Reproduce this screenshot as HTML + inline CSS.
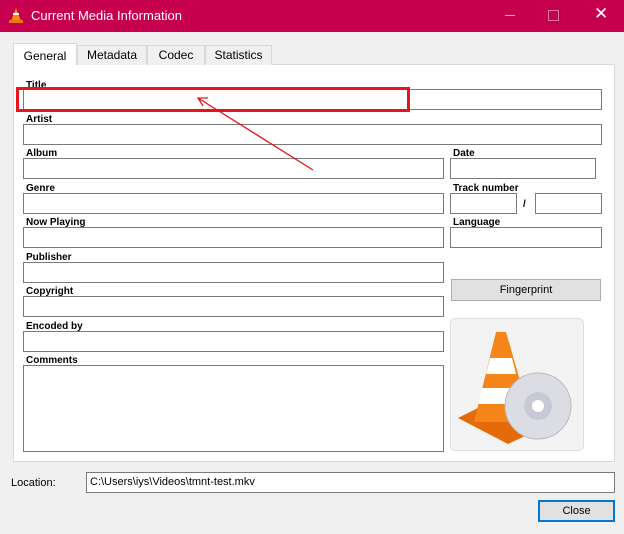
<!DOCTYPE html>
<html><head><style>
body{margin:0;width:624px;height:534px;background:#f0f0f0;font-family:"Liberation Sans",sans-serif;position:relative;overflow:hidden}
.a{position:absolute}
.in{position:absolute;background:#fff;border:1px solid #7a7a7a;box-sizing:border-box}
.lb{position:absolute;font-size:10px;font-weight:bold;color:#000}
.tab{position:absolute;top:45px;height:20px;font-size:12px;background:#f0f0f0;border:1px solid #d9d9d9;border-bottom:none;box-sizing:border-box;text-align:center;line-height:19px}
</style></head><body>
<div class="a" style="left:0;top:0;width:624px;height:32px;background:#c6004e"></div>
<svg class="a" style="left:8px;top:7px" width="16" height="17"><polygon points="8,1 3,14 13,14" fill="#f38a12"/><rect x="1" y="13" width="14" height="3" fill="#e67a0c"/><rect x="5" y="6" width="6" height="2" fill="#fff"/></svg>
<div class="a" style="left:31px;top:8px;color:#fff;font-size:13px">Current Media Information</div>
<div class="a" style="left:505px;top:15px;width:10px;height:1px;background:#f2a5c2"></div>
<div class="a" style="left:548px;top:10px;width:9px;height:9px;border:1px solid #e07aa0"></div>
<div class="a" style="left:594px;top:4px;color:#fff;font-size:17px">✕</div>
<div class="a" style="left:13px;top:64px;width:602px;height:398px;background:#fff;border:1px solid #d9d9d9;box-sizing:border-box"></div>
<div class="tab" style="left:13px;top:43px;width:64px;height:22px;background:#fff;border-color:#d9d9d9;line-height:24px">General</div>
<div class="tab" style="left:77px;width:70px">Metadata</div>
<div class="tab" style="left:147px;width:58px">Codec</div>
<div class="tab" style="left:205px;width:67px">Statistics</div>
<div class="lb" style="left:26px;top:80px">Title</div>
<div class="in" style="left:23px;top:89px;width:579px;height:21px"></div>
<div class="lb" style="left:26px;top:114px">Artist</div>
<div class="in" style="left:23px;top:124px;width:579px;height:21px"></div>
<div class="lb" style="left:26px;top:148px">Album</div>
<div class="in" style="left:23px;top:158px;width:421px;height:21px"></div>
<div class="lb" style="left:453px;top:148px">Date</div>
<div class="in" style="left:450px;top:158px;width:146px;height:21px"></div>
<div class="lb" style="left:26px;top:183px">Genre</div>
<div class="in" style="left:23px;top:193px;width:421px;height:21px"></div>
<div class="lb" style="left:453px;top:183px">Track number</div>
<div class="in" style="left:450px;top:193px;width:67px;height:21px"></div>
<div class="lb" style="left:523px;top:199px">/</div>
<div class="in" style="left:535px;top:193px;width:67px;height:21px"></div>
<div class="lb" style="left:26px;top:217px">Now Playing</div>
<div class="in" style="left:23px;top:227px;width:421px;height:21px"></div>
<div class="lb" style="left:453px;top:217px">Language</div>
<div class="in" style="left:450px;top:227px;width:152px;height:21px"></div>
<div class="lb" style="left:26px;top:252px">Publisher</div>
<div class="in" style="left:23px;top:262px;width:421px;height:21px"></div>
<div class="a" style="left:451px;top:279px;width:150px;height:22px;background:#e1e1e1;border:1px solid #adadad;box-sizing:border-box;font-size:11px;text-align:center;line-height:20px">Fingerprint</div>
<div class="lb" style="left:26px;top:286px">Copyright</div>
<div class="in" style="left:23px;top:296px;width:421px;height:21px"></div>
<div class="lb" style="left:26px;top:321px">Encoded by</div>
<div class="in" style="left:23px;top:331px;width:421px;height:21px"></div>
<div class="lb" style="left:26px;top:355px">Comments</div>
<div class="in" style="left:23px;top:365px;width:421px;height:87px"></div>
<div class="a" style="left:450px;top:318px;width:134px;height:133px;border:1px solid #ddd;border-radius:5px;background:#f3f3f3;box-sizing:border-box"></div>
<svg class="a" style="left:450px;top:318px" width="134" height="133">
<polygon points="8,100 40,84 92,110 58,126" fill="#e56a0a"/>
<polygon points="46,14 56,14 82,104 24,104" fill="#f58518"/>
<polygon points="40,40 62,40 66,56 36,56" fill="#fff"/>
<polygon points="32,70 70,70 74,86 28,86" fill="#fff"/>
<circle cx="88" cy="88" r="33" fill="#dcdce4" stroke="#bbb"/>
<circle cx="88" cy="88" r="14" fill="#c9c9d6"/>
<circle cx="88" cy="88" r="6" fill="#fff"/>
</svg>
<div class="a" style="left:11px;top:477px;font-size:11px">Location:</div>
<div class="in" style="left:86px;top:472px;width:529px;height:21px;font-size:11px;padding:3px 3px">C:\Users\iys\Videos\tmnt-test.mkv</div>
<div class="a" style="left:538px;top:500px;width:77px;height:22px;background:#e1e1e1;border:2px solid #0078d7;box-sizing:border-box;font-size:11px;text-align:center;line-height:18px">Close</div>
<div class="a" style="left:16px;top:87px;width:394px;height:25px;border:3px solid #e8141b;box-sizing:border-box"></div>
<svg class="a" style="left:0;top:0" width="624" height="534"><line x1="313" y1="170" x2="198" y2="98" stroke="#e8141b" stroke-width="1.3"/><polyline points="208,98 198,98 203,106" fill="none" stroke="#e8141b" stroke-width="1.3"/></svg>
</body></html>
